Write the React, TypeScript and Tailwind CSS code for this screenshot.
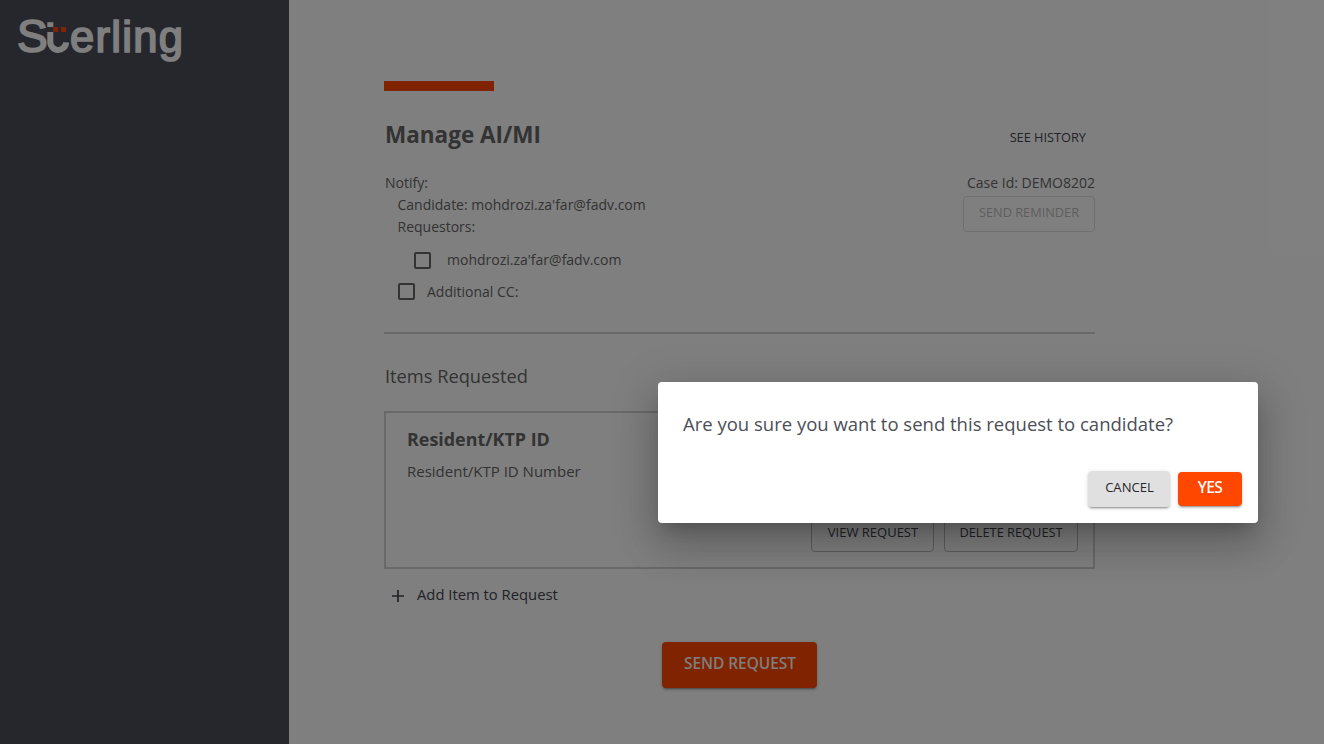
import type { ReactNode } from 'react';

function Logo() {
  return (
    <svg className="block h-[70px] w-[200px]" viewBox="0 0 200 70" aria-label="Sterling">
      <g fill="#fff" stroke="#fff" strokeWidth="1.7" fontFamily="'Liberation Sans', Arial, sans-serif">
        <text x="17" y="51.6" fontSize="46">S</text>
        <text x="70" y="51.6" fontSize="43.5" textLength="113" lengthAdjust="spacing">erling</text>
      </g>
      <path d="M50.3 32V41.7A7.9 7.9 0 0 0 66.1 42.3" fill="none" stroke="#fff" strokeWidth="6" />
      <rect x="47.3" y="22.2" width="6" height="4.8" fill="#fff" />
      <rect x="53.3" y="27" width="4.9" height="5" fill="#ff4713" />
      <rect x="61" y="27" width="5" height="5" fill="#ff4713" />
    </svg>
  );
}

function CheckBox({ className }: { className: string }) {
  return (
    <span
      role="checkbox"
      aria-checked="false"
      className={`size-[17px] shrink-0 rounded-[2px] border-2 border-[#666] ${className}`}
    />
  );
}

function OutlinedButton({ className, children }: { className: string; children: ReactNode }) {
  return (
    <button
      className={`flex h-9 items-center justify-center whitespace-nowrap rounded-[4px] border pb-1 leading-5 ${className}`}
    >
      {children}
    </button>
  );
}

export default function App() {
  return (
    <div className="relative flex h-[744px] w-[1324px] overflow-hidden bg-white font-['Open_Sans','Noto_Sans',sans-serif] text-sm leading-[22px] text-[#666]">
      <aside className="w-[289px] shrink-0 bg-[#4c4e58]">
        <Logo />
      </aside>

      <main className="ml-[95px] w-[711px] pt-[81px]">
        <div className="h-[10px] w-[110px] bg-[#ff4700]" />

        <header className="mt-[26px] flex h-8 justify-between pl-px">
          <h1 className="pt-[2px] text-[22.5px] font-bold leading-8">Manage AI/MI</h1>
          <button className="mt-[10px] h-5 pr-[9px] text-[12.75px] leading-5 text-[#42444e]">SEE HISTORY</button>
        </header>

        <section className="mt-[23px] flex h-[160px] justify-between">
          <div>
            <p className="pl-px">Notify:</p>
            <div className="pl-[13.5px]">
              <p>Candidate: mohdrozi.za'far@fadv.com</p>
              <p>Requestors:</p>
            </div>
            <label className="mt-[11px] flex pl-[30px]">
              <CheckBox className="mr-4 mt-[3px]" />
              mohdrozi.za'far@fadv.com
            </label>
            <label className="mt-[10px] flex pl-[14px]">
              <CheckBox className="mr-3 mt-[2px]" />
              Additional CC:
            </label>
          </div>
          <div className="flex flex-col items-end">
            <p className="mb-[2px]">Case Id: DEMO8202</p>
            <OutlinedButton className="w-[132px] border-[#dedede] text-[12.75px] text-[#bdbdbd]">
              SEND REMINDER
            </OutlinedButton>
          </div>
        </section>

        <hr className="h-[2px] border-0 bg-[#d3d3d3]" />

        <h2 className="mt-[30px] pl-px text-[18.26px] leading-6">Items Requested</h2>

        <section className="mt-[23px] flex h-[158px] flex-col border-2 border-[#d3d3d3] pb-[15px] pl-[21px] pr-[15px] pt-[14px]">
          <h3 className="text-[17.9px] font-bold leading-6">Resident/KTP ID</h3>
          <p className="mt-[9px] text-[15px]">Resident/KTP ID Number</p>
          <div className="mt-auto flex justify-end gap-[10px]">
            <OutlinedButton className="w-[123px] border-[#b9bac0] pl-px text-[13px] text-[#42444e]">VIEW REQUEST</OutlinedButton>
            <OutlinedButton className="w-[134px] border-[#b9bac0] text-[12.8px] text-[#42444e]">DELETE REQUEST</OutlinedButton>
          </div>
        </section>

        <button className="mt-[14px] flex items-start pl-2 text-[14.8px] leading-[22px] text-[#42444e]">
          <svg className="mr-[13px] mt-[7px] size-3" viewBox="0 0 12 12" stroke="currentColor" strokeWidth="1.7">
            <path d="M6 0v12M0 6h12" />
          </svg>
          Add Item to Request
        </button>

        <button className="mx-auto mt-[37px] flex h-[46px] w-[155px] items-center justify-center rounded-[4px] bg-[#ff4700] pb-1 pl-px font-['Noto_Sans',sans-serif] text-[15.45px] font-medium text-white shadow-[0_3px_1px_-2px_rgba(0,0,0,.2),0_2px_2px_0_rgba(0,0,0,.14),0_1px_5px_0_rgba(0,0,0,.12)]">
          SEND REQUEST
        </button>
      </main>

      <div className="absolute inset-0 bg-black/50">
        <div
          role="dialog"
          className="absolute left-[658px] top-[382px] flex h-[141px] w-[600px] flex-col rounded-[4px] bg-white pb-4 pl-[25px] pr-4 pt-7 shadow-[0_11px_15px_-7px_rgba(0,0,0,.2),0_24px_38px_3px_rgba(0,0,0,.14),0_9px_46px_8px_rgba(0,0,0,.12)]"
        >
          <p className="whitespace-nowrap text-[18.5px] leading-7 text-[#4c4e58]">
            Are you sure you want to send this request to candidate?
          </p>
          <div className="mt-auto flex items-center justify-end gap-2">
            <button className="flex h-9 w-[82px] items-center justify-center rounded-[4px] bg-[#e0e0e0] pb-[5px] pl-px text-[13.1px] text-[#26272c] shadow-[0_3px_1px_-2px_rgba(0,0,0,.2),0_2px_2px_0_rgba(0,0,0,.14),0_1px_5px_0_rgba(0,0,0,.12)]">
              CANCEL
            </button>
            <button className="flex h-[34px] w-16 items-center justify-center rounded-[4px] bg-[#ff4700] pb-1 font-['Noto_Sans',sans-serif] text-[15.6px] font-medium tracking-[-0.7px] text-white shadow-[0_3px_1px_-2px_rgba(0,0,0,.2),0_2px_2px_0_rgba(0,0,0,.14),0_1px_5px_0_rgba(0,0,0,.12)]">
              YES
            </button>
          </div>
        </div>
      </div>
    </div>
  );
}
